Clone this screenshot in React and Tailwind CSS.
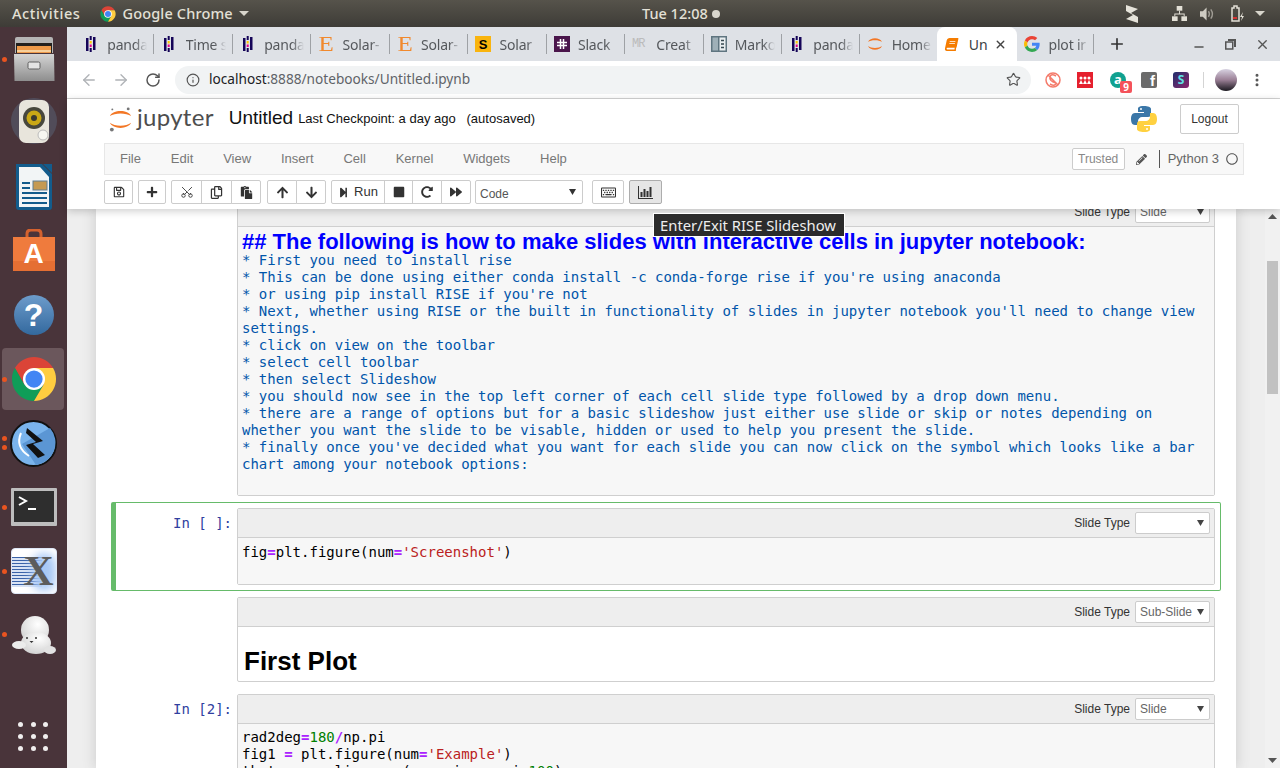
import { ArrowLeft, ArrowRight, RotateCw, Info, Star, Plus, X, Minus, MoreVertical, Scissors } from 'lucide-react';
import {
  FaRegSave, FaPlus, FaRegCopy, FaPaste, FaArrowUp, FaArrowDown, FaStepForward, FaStop,
  FaRedoAlt, FaForward, FaRegKeyboard, FaPencilAlt, FaRegCircle, FaBook,
} from 'react-icons/fa';

const ChromeLogo = ({ size = 16 }) => (
  <svg width={size} height={size} viewBox="0 0 48 48">
    <path d="M4.100 12.500A23 23 0 0 1 43.900 12.500H24L14 30z" fill="#db4437" />
    <path d="M4.100 12.500A23 23 0 0 0 24 47L34 30H14z" fill="#0f9d58" />
    <path d="M43.900 12.500A23 23 0 0 1 24 47L34 30 24 12.500z" fill="#ffcd40" />
    <circle cx="24" cy="24" r="11.500" fill="#fff" />
    <circle cx="24" cy="24" r="9" fill="#4285f4" />
  </svg>
);

const PandasIcon = () => (
  <svg width="12" height="16" viewBox="0 0 12 16">
    <rect x="1" y="2" width="2.500" height="13" fill="#150458" />
    <rect x="8" y="1" width="2.500" height="13" fill="#150458" />
    <rect x="4.700" y="0" width="2" height="4" fill="#150458" />
    <rect x="4.700" y="12" width="2" height="4" fill="#150458" />
    <rect x="4.700" y="5" width="2" height="2.500" fill="#ffca00" />
    <rect x="4.700" y="8.500" width="2" height="2.500" fill="#e70488" />
  </svg>
);

const JupyterArcs = ({ size = 16 }) => (
  <svg width={size} height={size} viewBox="0 0 32 32">
    <path d="M2 12C6 2 26 2 30 12C24 7 8 7 2 12z" fill="#f37726" />
    <path d="M2 20C6 30 26 30 30 20C24 25 8 25 2 20z" fill="#f37726" />
  </svg>
);

const tabIcons = {
  pandas: <PandasIcon />,
  etsy: <span className="text-[20px] leading-none scale-x-125 font-['Liberation_Serif',serif] text-[#f1892d]">E</span>,
  solar: (
    <span className="w-4 h-4 bg-[#f9b40e] flex items-center justify-center text-[13px] font-bold leading-none text-black font-['Liberation_Sans',sans-serif]">S</span>
  ),
  slack: (
    <svg width="16" height="16" viewBox="0 0 16 16">
      <rect width="16" height="16" fill="#4a154b" />
      <path d="M3 6.500h10M3 9.500h10M6.500 3v10M9.500 3v10" stroke="#fff" strokeWidth="1.500" />
    </svg>
  ),
  mr: <span className="text-[12px] leading-none font-['Liberation_Mono',monospace] text-[#bbb] tracking-[-1px] w-4">MR</span>,
  marko: (
    <svg width="16" height="16" viewBox="0 0 16 16">
      <rect width="16" height="16" fill="#5f7580" />
      <rect x="1.500" y="1.500" width="5.500" height="13" fill="#9fb0b8" />
      <rect x="8.500" y="1.500" width="6" height="13" fill="#e9eef0" />
      <path d="M10 4.500h3M10 8h3M10 11.500h3" stroke="#35474f" strokeWidth="1.500" />
    </svg>
  ),
  jupyter: <JupyterArcs />,
  book: <FaBook className="text-[#f57c00] -skew-x-12" size={13} />,
  google: (
    <svg width="16" height="16" viewBox="0 0 48 48">
      <path fill="#ea4335" d="M24 9.500c3.500 0 6.700 1.300 9.100 3.500l6.800-6.800C35.800 2.400 30.200 0 24 0 14.600 0 6.500 5.400 2.600 13.200l7.900 6.200C12.400 13.600 17.700 9.500 24 9.500z" />
      <path fill="#4285f4" d="M47 24.500c0-1.600-.1-3.100-.4-4.500H24v9h12.900c-.6 3-2.200 5.500-4.800 7.200l7.700 6C44.300 38 47 31.800 47 24.500z" />
      <path fill="#fbbc05" d="M10.500 28.600c-.5-1.400-.8-3-.8-4.600s.3-3.200.8-4.600l-7.900-6.200C.9 16.500 0 20.100 0 24s.9 7.500 2.600 10.800l7.900-6.200z" />
      <path fill="#34a853" d="M24 48c6.200 0 11.900-2 15.800-5.800l-7.700-6c-2.100 1.400-4.900 2.300-8.100 2.300-6.300 0-11.600-4.100-13.500-9.900l-7.900 6.200C6.500 42.600 14.600 48 24 48z" />
    </svg>
  ),
};

// only what the truncated tabs actually show
const tabs = [
  ['pandas', 'panda'],
  ['pandas', 'Time s'],
  ['pandas', 'panda'],
  ['etsy', 'Solar-'],
  ['etsy', 'Solar-'],
  ['solar', 'Solar'],
  ['slack', 'Slack'],
  ['mr', 'Creat'],
  ['marko', 'Marko'],
  ['pandas', 'panda'],
  ['jupyter', 'Home', false, true],
  ['book', 'Un', true],
  ['google', 'plot ir'],
];

const Tab = ({ icon, title, active, noSep }) => (
  <div
    className={
      'h-full flex items-center pl-[7px] shrink-0 last:w-[76.500px] ' +
      (active ? 'w-[80.450px] -ml-[2px] bg-white rounded-t-lg' : 'w-[78.450px]')
    }
  >
    <span className="w-4 flex justify-center shrink-0">{tabIcons[icon]}</span>
    {active ? (
      <>
        <span className="ml-[9px] w-[25px] text-[#3c4043] text-[14px]">{title}</span>
        <X size={13} strokeWidth={2.500} className="text-[#444]" />
      </>
    ) : (
      <span className="ml-[8.300px] w-[40px] whitespace-nowrap text-[#55585c] text-[14px] tracking-[-0.2px] [mask-image:linear-gradient(to_right,black_70%,transparent)]">
        {title}
      </span>
    )}
    {!active && !noSep && <span className="ml-auto w-px h-5 bg-[#9ea1a5]" />}
  </div>
);

const dockIcons = [
  {
    dot: ['top-[30px]'],
    icon: (
      <svg width="42" height="46" viewBox="0 0 42 46">
        <defs>
          <linearGradient id="cab" x1="0" y1="0" x2="0" y2="1">
            <stop offset="0" stopColor="#d4d4d4" />
            <stop offset="1" stopColor="#8e8e8e" />
          </linearGradient>
        </defs>
        <path d="M2 3q0-2 2-2h34q2 0 2 2v14H2z" fill="#b5b5b5" />
        <rect x="3" y="7" width="36" height="10" fill="#23211f" />
        <rect x="4" y="10" width="34" height="7" fill="#ee9a4a" />
        <rect x="4" y="14" width="34" height="2" fill="#f7cf9a" />
        <path d="M1 18h40l0.500 27H1.500z" fill="url(#cab)" />
        <rect x="15" y="26" width="12" height="7" rx="1.500" fill="#e4e4e4" stroke="#5f5f5f" />
      </svg>
    ),
  },
  {
    icon: (
      <svg width="50" height="50" viewBox="0 0 50 50">
        <circle cx="25" cy="23" r="23" fill="#5a6a80" fillOpacity="0.45" />
        <rect x="10" y="2" width="30" height="43" rx="7" fill="#e8e5dc" />
        <circle cx="25" cy="20" r="11" fill="#47473d" />
        <circle cx="25" cy="20" r="7.500" fill="#c9a816" />
        <circle cx="25" cy="20" r="3" fill="#3a3a30" />
        <circle cx="34" cy="37" r="5" fill="#f7f7f2" stroke="#bbb" />
      </svg>
    ),
  },
  {
    icon: (
      <svg width="40" height="48" viewBox="0 0 40 48">
        <path d="M2 1h26l10 10v33q0 3-3 3H5q-3 0-3-3z" fill="#135c8c" />
        <path d="M5 4h21l9 10v30H5z" fill="#f2f5f6" />
        <path d="M29 1l9 0v9z" fill="#135c8c" />
        <path d="M8 20h8M8 25h8M8 30h25M8 35h25M8 40h25" stroke="#135c8c" strokeWidth="2" />
        <rect x="19" y="18" width="14" height="9" fill="#c59a52" stroke="#5e7f93" />
      </svg>
    ),
  },
  {
    icon: (
      <div className="relative w-[42px] h-[44px]">
        <svg className="absolute inset-0" width="42" height="44" viewBox="0 0 42 44">
          <path d="M14 10V5q0-4 4-4h6q4 0 4 4v5" fill="none" stroke="#d4612e" strokeWidth="3" />
          <path d="M0 8h42v34H0z" fill="#ef7b3d" />
          <path d="M0 32h42v10H0z" fill="#e56f33" />
        </svg>
        <span className="absolute inset-x-0 top-[11px] text-center text-white text-[28px] leading-[28px] font-bold font-['Liberation_Sans',sans-serif]">A</span>
      </div>
    ),
  },
  {
    icon: (
      <div className="w-10 h-10 rounded-full bg-gradient-to-b from-[#6d9ccb] to-[#33699e] flex items-center justify-center text-white text-[32px] font-bold font-['Liberation_Sans',sans-serif] leading-none">
        ?
      </div>
    ),
  },
  { dot: ['top-[30px]'], active: true, icon: <ChromeLogo size={46} /> },
  {
    dot: ['top-[25px]', 'top-[34px]'],
    icon: (
      <svg width="47" height="47" viewBox="0 0 47 47">
        <circle cx="23.500" cy="23.500" r="22.500" fill="#7ab4ec" stroke="#111" strokeWidth="2" />
        <path d="M40 8a22.500 22.500 0 0 1-14 37L12 24z" fill="#5b96d4" />
        <path d="M17 8l16 13-10 3 12 11-7 3-12-13 10-3-10-9z" fill="#111" />
        <path d="M11 13q-6 14 8 23" fill="none" stroke="#fff" strokeWidth="2" />
      </svg>
    ),
  },
  {
    dot: ['top-[30px]'],
    icon: (
      <svg width="46" height="38" viewBox="0 0 46 38">
        <rect width="46" height="38" rx="1" fill="#bdbdbd" />
        <rect x="3" y="3" width="40" height="31" fill="#2e2e2e" />
        <path d="M8 9l7 4-7 4" fill="none" stroke="#fff" strokeWidth="2" />
        <path d="M17 21h8" stroke="#fff" strokeWidth="2" />
      </svg>
    ),
  },
  {
    dot: ['top-[30px]'],
    icon: (
      <div className="relative w-[46px] h-[46px] rounded bg-white border border-[#dde6f5] overflow-hidden flex items-center justify-end pr-[2px]">
        <div className="absolute left-0 top-[8px] w-[30px] h-[30px] bg-[repeating-linear-gradient(to_bottom,#3a62a8_0,#3a62a8_1px,#d9e3f4_1px,#d9e3f4_3px)]" />
        <div className="absolute left-[20px] top-[4px] w-[24px] h-[38px] rounded-full bg-[#a8c8f5] blur-[5px]" />
        <span className="relative text-[#5c5c5c] text-[42px] leading-none font-bold font-['Liberation_Serif',serif]">X</span>
      </div>
    ),
  },
  {
    dot: ['top-[29px]'],
    icon: (
      <svg width="44" height="40" viewBox="0 0 44 40">
        <defs>
          <radialGradient id="seal" cx="0.6" cy="0.3" r="0.7">
            <stop offset="0" stopColor="#ffffff" />
            <stop offset="1" stopColor="#d4d4d4" />
          </radialGradient>
        </defs>
        <circle cx="23" cy="15" r="14" fill="url(#seal)" />
        <ellipse cx="24" cy="28" rx="15" ry="11" fill="url(#seal)" />
        <ellipse cx="7" cy="30" rx="7" ry="4" fill="#ececec" />
        <ellipse cx="38" cy="35" rx="6" ry="4" fill="#e2e2e2" />
        <circle cx="15" cy="23" r="1" fill="#333" />
        <circle cx="24" cy="23" r="1" fill="#333" />
        <path d="M17.500 26h4l-2 2z" fill="#333" />
      </svg>
    ),
  },
];

const DockItem = ({ item }) => (
  <div className="relative h-16 shrink-0 flex items-center justify-center">
    {item.active && <div className="absolute left-[2px] right-[3px] top-[1px] bottom-[1px] rounded bg-[#6b575c]" />}
    {(item.dot || []).map((d) => (
      <span key={d} className={'absolute left-[2px] w-[5px] h-[5px] rounded-full bg-[#e95420] ' + d} />
    ))}
    <div className="relative">{item.icon}</div>
  </div>
);

const Btn = ({ w, children, className = 'bg-white border-[#ccc]' }) => (
  <div
    style={{ width: w }}
    className={
      'h-6 border -ml-px first:ml-0 first:rounded-l-[2px] last:rounded-r-[2px] flex items-center justify-center text-[#333] ' +
      className
    }
  >
    {children}
  </div>
);

const Group = ({ children, className = '' }) => <div className={'flex ' + className}>{children}</div>;

const SlideSelect = ({ value }) => (
  <div className="w-[75px] h-[22px] bg-white border border-[#ccc] rounded-[2px] flex items-center pl-[4px] pr-[5px] text-[12px] text-[#666]">
    <span>{value}</span>
    <svg className="ml-auto" width="7" height="6" viewBox="0 0 7 6">
      <path d="M0 0h7L3.500 6z" fill="#444" />
    </svg>
  </div>
);

const CellToolbar = ({ value }) => (
  <div className="h-[29px] bg-[#eee] border-b border-[#cfcfcf] flex items-center justify-end pr-1 gap-[5px] text-[12px] text-[#333]">
    <span>Slide Type</span>
    <SlideSelect value={value} />
  </div>
);

const Cell = ({ prompt, selected, slide, children, bodyClass = '' }) => (
  <div
    className={
      'flex border border-l-[5px] py-[5px] pr-[5px] ' +
      (selected ? 'border-[#66bb6a] rounded-[2px]' : 'border-transparent')
    }
  >
    <div className="w-[121px] shrink-0 pr-[5px] pt-[7px] text-right text-[14px] leading-[17px] text-[#303f9f] font-['DejaVu_Sans_Mono',monospace] whitespace-pre">
      {prompt}
    </div>
    <div className="flex-1 min-w-0 border border-[#cfcfcf] rounded-[2px]">
      <CellToolbar value={slide} />
      <div className={bodyClass}>{children}</div>
    </div>
  </div>
);

const notes = [
  '* First you need to install rise',
  "* This can be done using either conda install -c conda-forge rise if you're using anaconda",
  "* or using pip install RISE if you're not",
  "* Next, whether using RISE or the built in functionality of slides in jupyter notebook you'll need to change view settings.",
  '* click on view on the toolbar',
  '* select cell toolbar',
  '* then select Slideshow',
  '* you should now see in the top left corner of each cell slide type followed by a drop down menu.',
  '* there are a range of options but for a basic slideshow just either use slide or skip or notes depending on whether you want the slide to be visable, hidden or used to help you present the slide.',
  "* finally once you've decided what you want for each slide you can now click on the symbol which looks like a bar chart among your notebook options:",
];

const Op = ({ children }) => <span className="text-[#aa22ff] font-bold">{children}</span>;
const Str = ({ children }) => <span className="text-[#ba2121]">{children}</span>;
const Num = ({ children }) => <span className="text-[#008000]">{children}</span>;

const menu = ['File', 'Edit', 'View', 'Insert', 'Cell', 'Kernel', 'Widgets', 'Help'];

export default function App() {
  return (
    <div className="w-[1280px] h-[768px] overflow-hidden flex flex-col font-['Liberation_Sans',sans-serif] bg-white">
      {/* gnome top bar */}
      <div className="relative h-[27px] shrink-0 bg-gradient-to-b from-[#56534b] to-[#3e3c37] flex items-center text-[14.500px] font-['Noto_Sans',sans-serif] font-medium text-[#e3e0d6]">
        <span className="ml-3 tracking-[0.6px]">Activities</span>
        <span className="ml-[20px]"><ChromeLogo size={16} /></span>
        <span className="ml-[6px] tracking-[0.15px]">Google Chrome</span>
        <svg className="ml-[6px]" width="10" height="5" viewBox="0 0 10 5"><path d="M0 0h10L5 5z" fill="#d8d5cc" /></svg>
        <div className="absolute left-[642px] top-0 h-full flex items-center gap-[4px]">
          <span>Tue 12:08</span>
          <span className="w-2 h-2 rounded-full bg-[#d8d5cc]" />
        </div>
        <div className="ml-auto flex items-center h-full">
          <svg width="12" height="18" viewBox="0 0 12 18">
            <path d="M0 0l12 4-7 4 7 4v6L0 14l7-4-7-4z" fill="#e6e3da" />
          </svg>
          <svg className="ml-[34px]" width="15" height="15" viewBox="0 0 16 16" fill="#e3e0d6">
            <rect x="5" y="0" width="6" height="5" />
            <rect x="0" y="11" width="6" height="5" />
            <rect x="10" y="11" width="6" height="5" />
            <path d="M7.500 5h1v3H13.500v3h-1V9h-9v2h-1V8h5z" />
          </svg>
          <svg className="ml-[13px]" width="15" height="14" viewBox="0 0 16 14" fill="#cfccc3">
            <path d="M0 4h3l4-4v14l-4-4H0z" />
            <path d="M9 4q2 3 0 6M11.500 2q3.500 5 0 10" fill="none" stroke="#9f9c94" strokeWidth="1.500" />
          </svg>
          <svg className="ml-[15px]" width="15" height="18" viewBox="0 0 15 18">
            <path d="M2 3h2V1h3v2h2v13H2z" fill="none" stroke="#e3e0d6" strokeWidth="1.500" />
            <rect x="3" y="12" width="4" height="2" fill="#d32f2f" />
            <path d="M13 7l-3 5h2l-1 4 3-5h-2z" fill="#e3e0d6" />
          </svg>
          <svg className="ml-[10px] mr-[15px]" width="10" height="5" viewBox="0 0 10 5"><path d="M0 0h10L5 5z" fill="#d8d5cc" /></svg>
        </div>
      </div>

      <div className="flex-1 min-h-0 flex">
        {/* dock */}
        <div className="w-[67px] shrink-0 bg-[#49343a] flex flex-col">
          {dockIcons.map((item, i) => (
            <DockItem key={i} item={item} />
          ))}
          <div className="mt-auto mb-[17px] grid grid-cols-3 gap-[7px] w-[31px] mx-auto">
            {Array.from({ length: 9 }).map((_, i) => (
              <span key={i} className="w-[5px] h-[5px] rounded-full bg-[#f0eeee]" />
            ))}
          </div>
        </div>

        <div className="flex-1 min-w-0 flex flex-col">
          {/* tab strip */}
          <div className="h-[34px] shrink-0 bg-[#dee1e6] flex items-center pl-[9px] font-['Noto_Sans',sans-serif]">
            <div className="flex h-full">
              {tabs.map(([icon, title, active, noSep], i) => (
                <Tab key={i} icon={icon} title={title} active={active} noSep={noSep} />
              ))}
            </div>
            <Plus size={18} strokeWidth={2.200} className="text-[#333] ml-[14px]" />
            <div className="ml-auto mr-[10px] flex items-center gap-[19px]">
              <Minus size={14} strokeWidth={2.200} className="text-[#555] mt-[6px]" />
              <svg width="11" height="11" viewBox="0 0 11 11" fill="none" stroke="#555" strokeWidth="1.500">
                <rect x="0.750" y="3" width="7" height="7" />
                <path d="M3 1h7v7" strokeWidth="2" />
              </svg>
              <X size={15} strokeWidth={2.200} className="text-[#555]" />
            </div>
          </div>

          {/* address bar */}
          <div className="h-[38px] shrink-0 bg-white border-b border-[#d4d4d4] flex items-center font-['Noto_Sans',sans-serif]">
            <ArrowLeft size={18} strokeWidth={1.800} className="ml-[13px] text-[#b0b3b7]" />
            <ArrowRight size={18} strokeWidth={1.800} className="ml-[14px] text-[#b0b3b7]" />
            <RotateCw size={16} strokeWidth={2.200} className="ml-[15px] text-[#555]" />
            <div className="ml-[14px] w-[856px] h-[28px] rounded-full bg-[#f1f3f4] flex items-center pl-[11px] pr-[10px]">
              <Info size={14} className="text-[#555]" />
              <span className="ml-[9px] text-[13.650px] text-[#202124]">localhost</span>
              <span className="text-[13.650px] text-[#5f6368]">:8888/notebooks/Untitled.ipynb</span>
              <Star size={15} strokeWidth={1.800} className="ml-auto text-[#555]" />
            </div>
            <svg className="ml-[14px]" width="16" height="16" viewBox="0 0 16 16" fill="none" stroke="#f47b6b" strokeWidth="1.500">
              <circle cx="8" cy="8" r="7" />
              <path d="M11 4Q6 1 5 5t6 6q-1 4-6 1M3 3l10 10" />
            </svg>
            <div className="ml-[16px] w-4 h-4 bg-[#e5202e] flex items-center justify-center">
              <svg width="12" height="8" viewBox="0 0 12 8" fill="#fff"><circle cx="2" cy="2" r="1.500" /><circle cx="6" cy="2" r="1.500" /><circle cx="10" cy="2" r="1.500" /><path d="M0 8l2-4 2 4 2-4 2 4 2-4 2 4z" /></svg>
            </div>
            <div className="relative ml-[17px] w-4 h-4 rounded-full bg-[#10a190] flex items-center justify-center text-white text-[13px] font-bold leading-none">
              a
              <span className="absolute left-[10px] top-[9px] w-3 h-3 bg-[#f4525a] rounded-[2px] text-[10px] flex items-center justify-center leading-none">9</span>
            </div>
            <div className="ml-[15px] w-4 h-4 rounded-[2px] bg-[#6b6b6b] flex items-end justify-end pr-[2px] text-white text-[15px] font-bold leading-[15px] font-['Liberation_Sans',sans-serif]">f</div>
            <div className="ml-[16px] w-4 h-4 rounded-[3px] bg-gradient-to-br from-[#1b2a6b] to-[#8a1f6c] flex items-center justify-center text-[#5fe3e6] text-[12px] font-bold leading-none">S</div>
            <span className="ml-[14px] w-px h-4 bg-[#d4d4d4]" />
            <div className="ml-[11px] w-[22px] h-[22px] rounded-full bg-gradient-to-b from-[#d8d3e2] via-[#9a7f95] to-[#1d1b22]" />
            <MoreVertical size={16} strokeWidth={2.500} className="ml-[12px] text-[#555]" />
          </div>

          {/* jupyter header */}
          <div className="relative z-10 shrink-0 bg-white shadow-[0_2px_8px_rgba(0,0,0,0.2)]">
            <div className="h-[44px] pb-[5px] flex items-center pl-[41px]">
              <svg width="25" height="28" viewBox="0 0 26 28">
                <path d="M2 11C5 4 21 4 24 11C19 7.500 7 7.500 2 11z" fill="#f37726" />
                <path d="M2 18C5 25 21 25 24 18C19 22 7 22 2 18z" fill="#f37726" />
                <circle cx="21" cy="3.500" r="1.500" fill="#767677" />
                <circle cx="4" cy="25" r="2" fill="#767677" />
                <circle cx="4.500" cy="4" r="1" fill="#767677" />
              </svg>
              <span className="ml-[4px] text-[24px] leading-none text-[#4e4e4e] font-['Lato',sans-serif] tracking-[0.3px] -mt-[3px]">jupyter</span>
              <span className="ml-[15px] text-[19px] leading-none text-[#111] -mt-[3px]">Untitled</span>
              <span className="ml-[5px] text-[13px] text-[#111] mt-[1px] whitespace-pre">Last Checkpoint: a day ago   (autosaved)</span>
              <svg className="ml-auto" width="28" height="28" viewBox="0 0 28 28">
                <path d="M14 1c-6 0-6 2-6 3v3h6v1H5c-3 0-4 3-4 6s1 6 4 6h3v-4c0-2 2-4 4-4h6c2 0 3-1 3-3V4c0-2-3-3-7-3z" fill="#3b77a8" />
                <path d="M14 27c6 0 6-2 6-3v-3h-6v-1h9c3 0 4-3 4-6s-1-6-4-6h-3v4c0 2-2 4-4 4h-6c-2 0-3 1-3 3v5c0 2 3 3 7 3z" fill="#ffd140" />
                <circle cx="11" cy="4" r="1" fill="#fff" />
                <circle cx="17" cy="24" r="1" fill="#fff" />
              </svg>
              <div className="ml-[22px] mr-[41px] w-[59px] h-[30px] border border-[#ccc] rounded-[2px] flex items-center justify-center text-[12px] text-[#333]">
                Logout
              </div>
            </div>

            <div className="ml-[37px] mr-[36px] h-[32px] bg-[#f8f8f8] border border-[#e7e7e7] flex items-center text-[13px] text-[#777]">
              <div className="flex items-center gap-[29.900px] pl-[15px]">
                {menu.map((label) => (
                  <span key={label}>{label}</span>
                ))}
              </div>
              <div className="ml-auto mr-[5px] flex items-center">
                <div className="w-[53px] h-[22px] border border-[#ccc] bg-white rounded-[2px] flex items-center justify-center text-[12px] text-[#888]">Trusted</div>
                <FaPencilAlt size={11} className="ml-[11px] text-[#555]" />
                <span className="ml-[12px] w-px h-[18px] bg-[#555]" />
                <span className="ml-[8px] text-[#666]">Python 3</span>
                <FaRegCircle size={12} className="ml-[7px] text-[#555]" />
              </div>
            </div>

            <div className="h-[34px] ml-[37px] flex items-center">
              <Group><Btn w={29}><FaRegSave size={12} /></Btn></Group>
              <Group className="ml-[5px]"><Btn w={28}><FaPlus size={12} /></Btn></Group>
              <Group className="ml-[5px]">
                <Btn w={31}><Scissors size={14} strokeWidth={1.500} className="-rotate-90" /></Btn>
                <Btn w={31}><FaRegCopy size={13} /></Btn>
                <Btn w={30}><FaPaste size={13} /></Btn>
              </Group>
              <Group className="ml-[6px]">
                <Btn w={30}><FaArrowUp size={13} /></Btn>
                <Btn w={30}><FaArrowDown size={13} /></Btn>
              </Group>
              <Group className="ml-[5px]">
                <Btn w={54} className="bg-white border-[#ccc] gap-[5px] text-[13px]"><FaStepForward size={11} /><span>Run</span></Btn>
                <Btn w={29}><FaStop size={12} /></Btn>
                <Btn w={30}><FaRedoAlt size={12} /></Btn>
                <Btn w={30}><FaForward size={12} /></Btn>
              </Group>
              <div className="ml-[4px] w-[108px] h-6 bg-white border border-[#ccc] rounded-[2px] flex items-center pl-[4px] pr-[6px] text-[12px] text-[#555]">
                <span className="pt-[3px]">Code</span>
                <svg className="ml-auto" width="7" height="6" viewBox="0 0 7 6"><path d="M0 0h7L3.500 6z" fill="#333" /></svg>
              </div>
              <Group className="ml-[9px]"><Btn w={32}><FaRegKeyboard size={15} /></Btn></Group>
              <Group className="ml-[5px]">
                <Btn w={33} className="bg-[#e6e6e6] border-[#adadad]">
                  <svg width="15" height="13" viewBox="0 0 15 13" fill="#333">
                    <path d="M0 0h1v12h14v1H0z" />
                    <rect x="2.500" y="6" width="2" height="5" />
                    <rect x="5.500" y="3" width="2" height="8" />
                    <rect x="8.500" y="5" width="2" height="6" />
                    <rect x="11.500" y="1" width="2" height="10" />
                  </svg>
                </Btn>
              </Group>
            </div>

            {/* tooltip */}
            <div className="absolute left-[586px] top-[114px] w-[192px] h-[24px] pr-[2px] bg-[#2b2b2b] border border-white flex items-center justify-center text-[14.800px] text-[#eee] font-['Noto_Sans',sans-serif] whitespace-nowrap">
              Enter/Exit RISE Slideshow
            </div>
          </div>

          {/* notebook */}
          <div className="flex-1 min-h-0 flex bg-[#eeeeee] overflow-hidden">
            <div className="w-[29px] shrink-0" />
            <div className="w-[1140px] shrink-0 bg-white px-[15px] shadow-[0_0_12px_1px_rgba(87,87,87,0.2)]">
              <div className="-mt-[18px]">
                <Cell slide="Slide" bodyClass="bg-[#f7f7f7] h-[268px] pl-[4px] pr-[4px] font-['DejaVu_Sans_Mono',monospace] text-[14px] leading-[17px] text-[#0055aa]">
                  <div className="h-[25px] pt-[3px] text-[22px] leading-[24px] font-bold text-[#0000ff] font-['Liberation_Sans',sans-serif] whitespace-nowrap">
                    ## The following is how to make slides with interactive cells in jupyter notebook:
                  </div>
                  {notes.map((n, i) => (
                    <div key={i}>{n}</div>
                  ))}
                </Cell>
                <Cell
                  selected
                  prompt="In [ ]:"
                  slide=""
                  bodyClass="bg-[#f7f7f7] h-[46px] pl-[4px] pt-[6px] font-['DejaVu_Sans_Mono',monospace] text-[14px] leading-[17px] text-black"
                >
                  fig<Op>=</Op>plt.figure(num<Op>=</Op><Str>'Screenshot'</Str>)
                </Cell>
                <Cell slide="Sub-Slide" bodyClass="h-[54px] pl-[6px] pt-[19px]">
                  <div className="text-[26px] leading-[30px] font-bold text-black">First Plot</div>
                </Cell>
                <Cell
                  prompt="In [2]:"
                  slide="Slide"
                  bodyClass="bg-[#f7f7f7] pl-[4px] pt-[5px] h-[80px] font-['DejaVu_Sans_Mono',monospace] text-[14px] leading-[17px] text-black whitespace-pre"
                >
                  <div>rad2deg<Op>=</Op><Num>180</Num><Op>/</Op>np.pi</div>
                  <div>fig1 <Op>=</Op> plt.figure(num<Op>=</Op><Str>'Example'</Str>)</div>
                  <div>theta <Op>=</Op> np.linspace(<Op>-</Op>np.pi, np.pi,<Num>100</Num>)</div>
                </Cell>
              </div>
            </div>
            <div className="w-[29px] shrink-0" />
            {/* page scrollbar */}
            <div className="w-[15px] shrink-0 bg-[#f1f1f1] flex flex-col items-center">
              <svg className="mt-[5px]" width="9" height="5" viewBox="0 0 9 5"><path d="M0 5h9L4.500 0z" fill="#555" /></svg>
              <div className="mt-[42px] w-[11px] h-[133px] bg-[#c1c1c1]" />
              <svg className="mt-auto mb-[5px]" width="9" height="5" viewBox="0 0 9 5"><path d="M0 0h9L4.500 5z" fill="#555" /></svg>
            </div>
          </div>
        </div>
      </div>
    </div>
  );
}
